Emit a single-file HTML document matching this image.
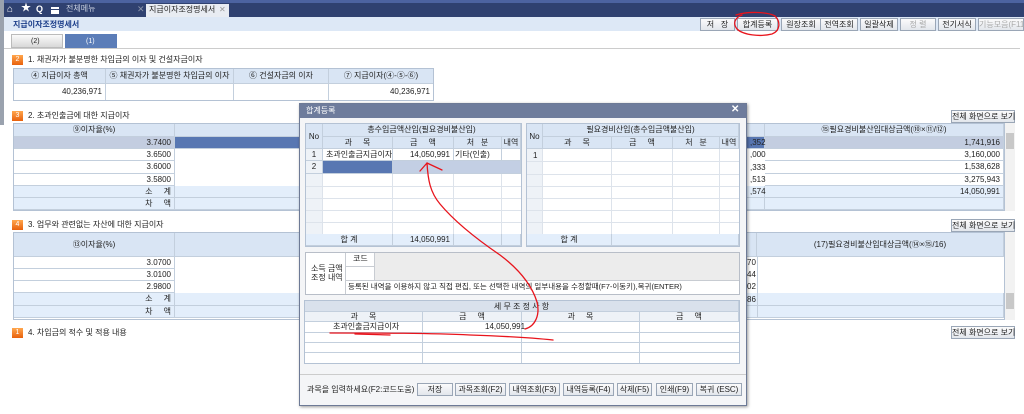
<!DOCTYPE html>
<html><head><meta charset="utf-8">
<style>
*{margin:0;padding:0;box-sizing:border-box}
body{width:1024px;height:414px;overflow:hidden;background:#fff;position:relative;font-family:"Liberation Sans","Noto Sans CJK KR","NanumGothic",sans-serif;font-size:8px;color:#222}
.a{position:absolute}
.t{position:absolute;white-space:nowrap;line-height:1}
.btn{position:absolute;height:13px;border:1px solid #9aa6b6;background:linear-gradient(#fbfbfb,#e2e6ec);font-size:8px;text-align:center;line-height:11px;color:#222;white-space:nowrap}
.hd{background:#d9e5f4}
.g{border:1px solid #b4c2d4}
.cell{position:absolute;border-right:1px solid #c3cfdd;border-bottom:1px solid #c3cfdd;font-size:8px;line-height:12px;white-space:nowrap;overflow:hidden}
.r{text-align:right;padding-right:3px}
.c{text-align:center}
.ic{position:absolute;width:11px;height:10px;background:linear-gradient(#ffa64d,#e8600c);color:#fff;font-size:7px;text-align:center;line-height:10px}
</style></head><body>
<!-- top bar -->
<div class="a" style="left:0;top:0;width:1024px;height:17px;background:#2f4170"></div>
<div class="a" style="left:0;top:0;width:1024px;height:3px;background:#4c63a0"></div>
<div class="a" style="left:0;top:0;width:4px;height:125px;background:#9aa2ae"></div>
<div class="t" style="left:7px;top:5px;color:#fff;font-size:10px">⌂</div>
<div class="t" style="left:21px;top:4px;color:#fff;font-size:10px">★</div>
<div class="t" style="left:36px;top:5px;color:#fff;font-size:9px;font-weight:bold">Q</div>
<div class="a" style="left:51px;top:7px;width:8px;height:7px;background:#fff"></div>
<div class="a" style="left:51px;top:9px;width:8px;height:1px;background:#2f4170"></div>
<div class="t" style="left:66px;top:5px;color:#c8d0e0;font-size:8px">전체메뉴</div>
<div class="t" style="left:137px;top:5px;color:#8a94aa;font-size:9px">✕</div>
<div class="a" style="left:146px;top:4px;width:83px;height:13px;background:#e8ecf2"></div>
<div class="t" style="left:149px;top:6px;font-size:8px">지급이자조정명세서</div>
<div class="t" style="left:219px;top:6px;color:#999;font-size:8px">✕</div>
<!-- title bar -->
<div class="a" style="left:4px;top:17px;width:1020px;height:14px;background:#dde8f6"></div>
<div class="t" style="left:13px;top:21px;color:#1d3f8a;font-size:8px;font-weight:bold">지급이자조정명세서</div>
<div class="btn" style="left:700px;top:18px;width:35px">저 &nbsp; 장</div>
<div class="btn" style="left:737px;top:18px;width:41px">합계등록</div>
<div class="btn" style="left:781px;top:18px;width:40px">원장조회</div>
<div class="btn" style="left:820px;top:18px;width:38px">전역조회</div>
<div class="btn" style="left:860px;top:18px;width:38px">일괄삭제</div>
<div class="btn" style="left:900px;top:18px;width:36px;color:#aaa">정 렬</div>
<div class="btn" style="left:938px;top:18px;width:38px">전기서식</div>
<div class="btn" style="left:978px;top:18px;width:46px;color:#aaa">기능모음(F11)</div>
<!-- tabs -->
<div class="a" style="left:11px;top:34px;width:52px;height:14px;background:linear-gradient(#fafafa,#d8d8d8);border:1px solid #bbb"></div>
<div class="t" style="left:31px;top:38px;font-size:7px">(2)</div>
<div class="a" style="left:65px;top:34px;width:52px;height:14px;background:#5b7db8"></div>
<div class="t" style="left:86px;top:38px;font-size:7px;color:#fff">(1)</div>
<div class="a" style="left:4px;top:48px;width:1016px;height:1px;background:#ccc"></div>
<!-- section 1 -->
<div class="ic" style="left:12px;top:55px">2</div>
<div class="t" style="left:28px;top:56px">1. 채권자가 불분명한 차입금의 이자 및 건설자금이자</div>
<div class="a g" style="left:13px;top:68px;width:421px;height:33px"></div>
<div class="cell hd c" style="left:14px;top:69px;width:92px;height:15px;line-height:14px">④ 지급이자 총액</div>
<div class="cell hd c" style="left:106px;top:69px;width:128px;height:15px;line-height:14px">⑤ 채권자가 불분명한 차입금의 이자</div>
<div class="cell hd c" style="left:234px;top:69px;width:95px;height:15px;line-height:14px">⑥ 건설자금의 이자</div>
<div class="cell hd c" style="left:329px;top:69px;width:104px;height:15px;line-height:14px;border-right:0">⑦ 지급이자(④-⑤-⑥)</div>
<div class="cell r" style="left:14px;top:84px;width:92px;height:16px;line-height:16px;border-bottom:0">40,236,971</div>
<div class="cell" style="left:106px;top:84px;width:128px;height:16px;border-bottom:0"></div>
<div class="cell" style="left:234px;top:84px;width:95px;height:16px;border-bottom:0"></div>
<div class="cell r" style="left:329px;top:84px;width:104px;height:16px;line-height:16px;border:0">40,236,971</div>
<!-- section 2 -->
<div class="ic" style="left:12px;top:111px">3</div>
<div class="t" style="left:28px;top:112px">2. 초과인출금에 대한 지급이자</div>
<div class="btn" style="left:951px;top:110px;width:64px">전체 화면으로 보기</div>
<div class="a g" style="left:13px;top:123px;width:992px;height:88px"></div>
<div class="cell hd c" style="left:14px;top:124px;width:161px;height:13px">⑨이자율(%)</div>
<div class="cell hd c" style="left:175px;top:124px;width:590px;height:13px">⑩지급이자(④-⑤-⑥)</div>
<div class="cell hd c" style="left:765px;top:124px;width:239px;height:13px">⑮필요경비불산입대상금액(⑩×⑪/⑫)</div>
<div class="cell r" style="left:14px;top:137px;width:161px;height:12px;background:#c3cde0">3.7400</div>
<div class="cell" style="left:175px;top:137px;width:590px;height:12px;background:#5877b2"></div>
<div class="cell r" style="left:765px;top:137px;width:239px;height:12px;background:#c3cde0">1,741,916</div>
<div class="cell r" style="left:14px;top:149px;width:161px;height:12px">3.6500</div>
<div class="cell r" style="left:765px;top:149px;width:239px;height:12px">3,160,000</div>
<div class="cell r" style="left:14px;top:161px;width:161px;height:13px">3.6000</div>
<div class="cell r" style="left:765px;top:161px;width:239px;height:13px">1,538,628</div>
<div class="cell r" style="left:14px;top:174px;width:161px;height:12px">3.5800</div>
<div class="cell r" style="left:765px;top:174px;width:239px;height:12px">3,275,943</div>
<div class="cell r hd" style="left:14px;top:186px;width:161px;height:12px;background:#e3eefb">소 &nbsp; &nbsp; 계</div>
<div class="cell" style="left:175px;top:186px;width:590px;height:12px;background:#e3eefb"></div>
<div class="cell r" style="left:765px;top:186px;width:239px;height:12px;background:#e3eefb">14,050,991</div>
<div class="cell r" style="left:14px;top:198px;width:161px;height:12px;background:#e3eefb">차 &nbsp; &nbsp; 액</div>
<div class="cell" style="left:175px;top:198px;width:590px;height:12px;background:#e3eefb"></div>
<div class="cell" style="left:765px;top:198px;width:239px;height:12px;background:#e3eefb"></div>
<div class="t" style="left:750px;top:139px">,352</div>
<div class="t" style="left:750px;top:151px">,000</div>
<div class="t" style="left:750px;top:164px">,333</div>
<div class="t" style="left:750px;top:176px">,513</div>
<div class="t" style="left:750px;top:188px">,574</div>
<div class="a" style="left:1005px;top:123px;width:10px;height:88px;background:#f2f2f2"></div>
<div class="a" style="left:1006px;top:133px;width:8px;height:16px;background:#c8c8c8"></div>
<!-- section 3 -->
<div class="ic" style="left:12px;top:220px">4</div>
<div class="t" style="left:28px;top:221px">3. 업무와 관련없는 자산에 대한 지급이자</div>
<div class="btn" style="left:951px;top:219px;width:64px">전체 화면으로 보기</div>
<div class="a g" style="left:13px;top:232px;width:992px;height:88px"></div>
<div class="cell hd c" style="left:14px;top:233px;width:161px;height:24px;line-height:24px">⑬이자율(%)</div>
<div class="cell hd c" style="left:175px;top:233px;width:582px;height:24px;line-height:10px;padding-top:2px">⑭지급이자<br>(④-⑤-⑥-⑩)</div>
<div class="cell hd c" style="left:757px;top:233px;width:247px;height:24px;line-height:24px">(17)필요경비불산입대상금액(⑭×⑮/16)</div>
<div class="cell r" style="left:14px;top:257px;width:161px;height:12px">3.0700</div>
<div class="cell r" style="left:14px;top:269px;width:161px;height:12px">3.0100</div>
<div class="cell r" style="left:14px;top:281px;width:161px;height:12px">2.9800</div>
<div class="cell r" style="left:14px;top:293px;width:161px;height:13px;background:#e3eefb">소 &nbsp; &nbsp; 계</div>
<div class="cell" style="left:175px;top:293px;width:829px;height:13px;background:#e3eefb"></div>
<div class="cell r" style="left:14px;top:306px;width:161px;height:12px;background:#e3eefb">차 &nbsp; &nbsp; 액</div>
<div class="cell" style="left:175px;top:306px;width:829px;height:12px;background:#e3eefb"></div>
<div class="a" style="left:757px;top:257px;width:1px;height:61px;background:#c3cfdd"></div>
<div class="t" style="left:747px;top:259px">70</div>
<div class="t" style="left:747px;top:271px">44</div>
<div class="t" style="left:747px;top:283px">02</div>
<div class="t" style="left:747px;top:296px">86</div>
<div class="a" style="left:1005px;top:232px;width:10px;height:88px;background:#f2f2f2"></div>
<div class="a" style="left:1006px;top:293px;width:8px;height:16px;background:#c8c8c8"></div>
<!-- section 4 -->
<div class="ic" style="left:12px;top:328px">1</div>
<div class="t" style="left:28px;top:329px">4. 차입금의 적수 및 적용 내용</div>
<div class="btn" style="left:951px;top:326px;width:64px">전체 화면으로 보기</div>

<!-- modal -->
<div class="a" style="left:299px;top:103px;width:448px;height:303px;background:#f4f5f7;border:1px solid #6d7a96;box-shadow:1px 1px 3px rgba(0,0,0,.4)"></div>
<div class="a" style="left:300px;top:104px;width:446px;height:14px;background:#6e7c9c"></div>
<div class="t" style="left:306px;top:107px;color:#fff;font-size:8px">합계등록</div>
<div class="t" style="left:731px;top:105px;color:#fff;font-size:10px;font-weight:bold">✕</div>
<!-- left grid -->
<div class="a" style="left:305px;top:123px;width:217px;height:124px;background:#fff;border:1px solid #b4c2d4"></div>
<div class="cell hd c" style="left:306px;top:124px;width:17px;height:25px;line-height:25px">No</div>
<div class="cell hd c" style="left:323px;top:124px;width:198px;height:13px">총수입금액산입(필요경비불산입)</div>
<div class="cell hd c" style="left:323px;top:137px;width:70px;height:12px">과 &nbsp; &nbsp; 목</div>
<div class="cell hd c" style="left:393px;top:137px;width:61px;height:12px">금 &nbsp; &nbsp; 액</div>
<div class="cell hd c" style="left:454px;top:137px;width:48px;height:12px">처 &nbsp; 분</div>
<div class="cell hd c" style="left:502px;top:137px;width:19px;height:12px">내역</div>
<div class="cell c hd" style="left:306px;top:149px;width:17px;height:12px;background:#eef2f7">1</div>
<div class="cell" style="left:323px;top:149px;width:70px;height:12px;padding-left:3px">초과인출금지급이자</div>
<div class="cell r" style="left:393px;top:149px;width:61px;height:12px">14,050,991</div>
<div class="cell" style="left:454px;top:149px;width:48px;height:12px;padding-left:1px">기타(인출)</div>
<div class="cell" style="left:502px;top:149px;width:19px;height:12px"></div>
<div class="cell c" style="left:306px;top:161px;width:17px;height:13px;background:#eef2f7">2</div>
<div class="cell" style="left:323px;top:161px;width:70px;height:13px;background:#5877b2"></div>
<div class="cell" style="left:393px;top:161px;width:128px;height:13px;background:#c3cfe4"></div>
<div class="a" style="left:306px;top:174px;width:17px;height:60px;background:#eef2f7"></div>
<div class="a" style="left:306px;top:186px;width:215px;height:1px;background:#dde3eb"></div>
<div class="a" style="left:306px;top:198px;width:215px;height:1px;background:#dde3eb"></div>
<div class="a" style="left:306px;top:210px;width:215px;height:1px;background:#dde3eb"></div>
<div class="a" style="left:306px;top:222px;width:215px;height:1px;background:#dde3eb"></div>
<div class="a" style="left:322px;top:174px;width:1px;height:60px;background:#dde3eb"></div>
<div class="a" style="left:392px;top:174px;width:1px;height:60px;background:#dde3eb"></div>
<div class="a" style="left:453px;top:174px;width:1px;height:60px;background:#dde3eb"></div>
<div class="a" style="left:501px;top:174px;width:1px;height:60px;background:#dde3eb"></div>
<div class="cell c" style="left:306px;top:234px;width:87px;height:12px;background:#e3eefb">합 계</div>
<div class="cell r" style="left:393px;top:234px;width:61px;height:12px;background:#e3eefb">14,050,991</div>
<div class="cell" style="left:454px;top:234px;width:48px;height:12px;background:#e3eefb"></div>
<div class="cell" style="left:502px;top:234px;width:19px;height:12px;background:#e3eefb"></div>
<!-- right grid -->
<div class="a" style="left:526px;top:123px;width:214px;height:124px;background:#fff;border:1px solid #b4c2d4"></div>
<div class="cell hd c" style="left:527px;top:124px;width:16px;height:25px;line-height:25px">No</div>
<div class="cell hd c" style="left:543px;top:124px;width:196px;height:13px">필요경비산입(총수입금액불산입)</div>
<div class="cell hd c" style="left:543px;top:137px;width:69px;height:12px">과 &nbsp; &nbsp; 목</div>
<div class="cell hd c" style="left:612px;top:137px;width:61px;height:12px">금 &nbsp; &nbsp; 액</div>
<div class="cell hd c" style="left:673px;top:137px;width:47px;height:12px">처 &nbsp; 분</div>
<div class="cell hd c" style="left:720px;top:137px;width:19px;height:12px">내역</div>
<div class="a" style="left:527px;top:149px;width:16px;height:85px;background:#eef2f7"></div>
<div class="t" style="left:533px;top:152px">1</div>
<div class="a" style="left:527px;top:161px;width:212px;height:1px;background:#dde3eb"></div>
<div class="a" style="left:527px;top:174px;width:212px;height:1px;background:#dde3eb"></div>
<div class="a" style="left:527px;top:186px;width:212px;height:1px;background:#dde3eb"></div>
<div class="a" style="left:527px;top:198px;width:212px;height:1px;background:#dde3eb"></div>
<div class="a" style="left:527px;top:210px;width:212px;height:1px;background:#dde3eb"></div>
<div class="a" style="left:527px;top:222px;width:212px;height:1px;background:#dde3eb"></div>
<div class="a" style="left:542px;top:149px;width:1px;height:85px;background:#dde3eb"></div>
<div class="a" style="left:611px;top:149px;width:1px;height:85px;background:#dde3eb"></div>
<div class="a" style="left:672px;top:149px;width:1px;height:85px;background:#dde3eb"></div>
<div class="a" style="left:719px;top:149px;width:1px;height:85px;background:#dde3eb"></div>
<div class="cell c" style="left:527px;top:234px;width:85px;height:12px;background:#e3eefb">합 계</div>
<div class="cell" style="left:612px;top:234px;width:127px;height:12px;background:#e3eefb"></div>
<!-- code box -->
<div class="a" style="left:305px;top:252px;width:435px;height:43px;background:#fff;border:1px solid #b8bec8"></div>
<div class="a" style="left:345px;top:253px;width:1px;height:41px;background:#c8ccd2"></div>
<div class="a" style="left:374px;top:253px;width:1px;height:27px;background:#c8ccd2"></div>
<div class="a" style="left:346px;top:280px;width:393px;height:1px;background:#c8ccd2"></div>
<div class="a" style="left:346px;top:266px;width:28px;height:1px;background:#c8ccd2"></div>
<div class="a" style="left:375px;top:253px;width:364px;height:27px;background:#ececec"></div>
<div class="t" style="left:353px;top:255px">코드</div>
<div class="t" style="left:311px;top:264px;line-height:9px;text-align:center">소득 금액<br>조정 내역</div>
<div class="t" style="left:348px;top:283px;font-size:7.5px">등록된 내역을 이용하지 않고 직접 편집, 또는 선택한 내역의 일부내용을 수정할때(F7-이동키),복귀(ENTER)</div>
<!-- tax table -->
<div class="a" style="left:304px;top:300px;width:436px;height:64px;background:#fff;border:1px solid #b4c2d4"></div>
<div class="cell hd c" style="left:305px;top:301px;width:434px;height:11px;line-height:11px;background:#d9e1ec">세 무 조 정 사 항</div>
<div class="cell hd c" style="left:305px;top:312px;width:118px;height:10px;line-height:10px;background:#eef2f7">과 &nbsp; &nbsp; 목</div>
<div class="cell hd c" style="left:423px;top:312px;width:99px;height:10px;line-height:10px;background:#eef2f7">금 &nbsp; &nbsp; 액</div>
<div class="cell hd c" style="left:522px;top:312px;width:118px;height:10px;line-height:10px;background:#eef2f7">과 &nbsp; &nbsp; 목</div>
<div class="cell hd c" style="left:640px;top:312px;width:99px;height:10px;line-height:10px;background:#eef2f7">금 &nbsp; &nbsp; 액</div>
<div class="a" style="left:305px;top:332px;width:434px;height:1px;background:#c3cfdd"></div>
<div class="a" style="left:305px;top:342px;width:434px;height:1px;background:#c3cfdd"></div>
<div class="a" style="left:305px;top:352px;width:434px;height:1px;background:#c3cfdd"></div>
<div class="a" style="left:422px;top:322px;width:1px;height:41px;background:#c3cfdd"></div>
<div class="a" style="left:521px;top:322px;width:1px;height:41px;background:#c3cfdd"></div>
<div class="a" style="left:639px;top:322px;width:1px;height:41px;background:#c3cfdd"></div>
<div class="t" style="left:333px;top:323px">초과인출금지급이자</div>
<div class="t" style="left:485px;top:323px">14,050,991</div>
<!-- bottom -->
<div class="a" style="left:300px;top:374px;width:446px;height:1px;background:#ccc"></div>
<div class="t" style="left:307px;top:386px">과목을 입력하세요(F2:코드도움)</div>
<div class="btn" style="left:417px;top:383px;width:36px">저장</div>
<div class="btn" style="left:455px;top:383px;width:51px">과목조회(F2)</div>
<div class="btn" style="left:509px;top:383px;width:51px">내역조회(F3)</div>
<div class="btn" style="left:563px;top:383px;width:51px">내역등록(F4)</div>
<div class="btn" style="left:617px;top:383px;width:35px">삭제(F5)</div>
<div class="btn" style="left:656px;top:383px;width:37px">인쇄(F9)</div>
<div class="btn" style="left:696px;top:383px;width:46px">복귀 (ESC)</div>
<!-- red annotations -->
<svg class="a" style="left:0;top:0" width="1024" height="414" viewBox="0 0 1024 414" fill="none" stroke="#e8141c" stroke-width="1.3" stroke-linecap="round">
<path d="M736 15 C748 11,768 12,775 16 C781 22,780 31,772 34 C760 37,743 35,737 29 C733 24,734 18,742 15"/>
<path d="M525 329 C536 326,540 314,537 302 C532 286,520 270,500 255 C478 240,455 222,440 204 C430 192,428 180,427 163"/>
<path d="M427 163 L420 171 M427 163 L442 170"/>
<path d="M330 333 C380 333,430 333,470 335 C500 336,525 337,553 340"/>
<path d="M355 334 L390 335"/>
</svg>
</body></html>
